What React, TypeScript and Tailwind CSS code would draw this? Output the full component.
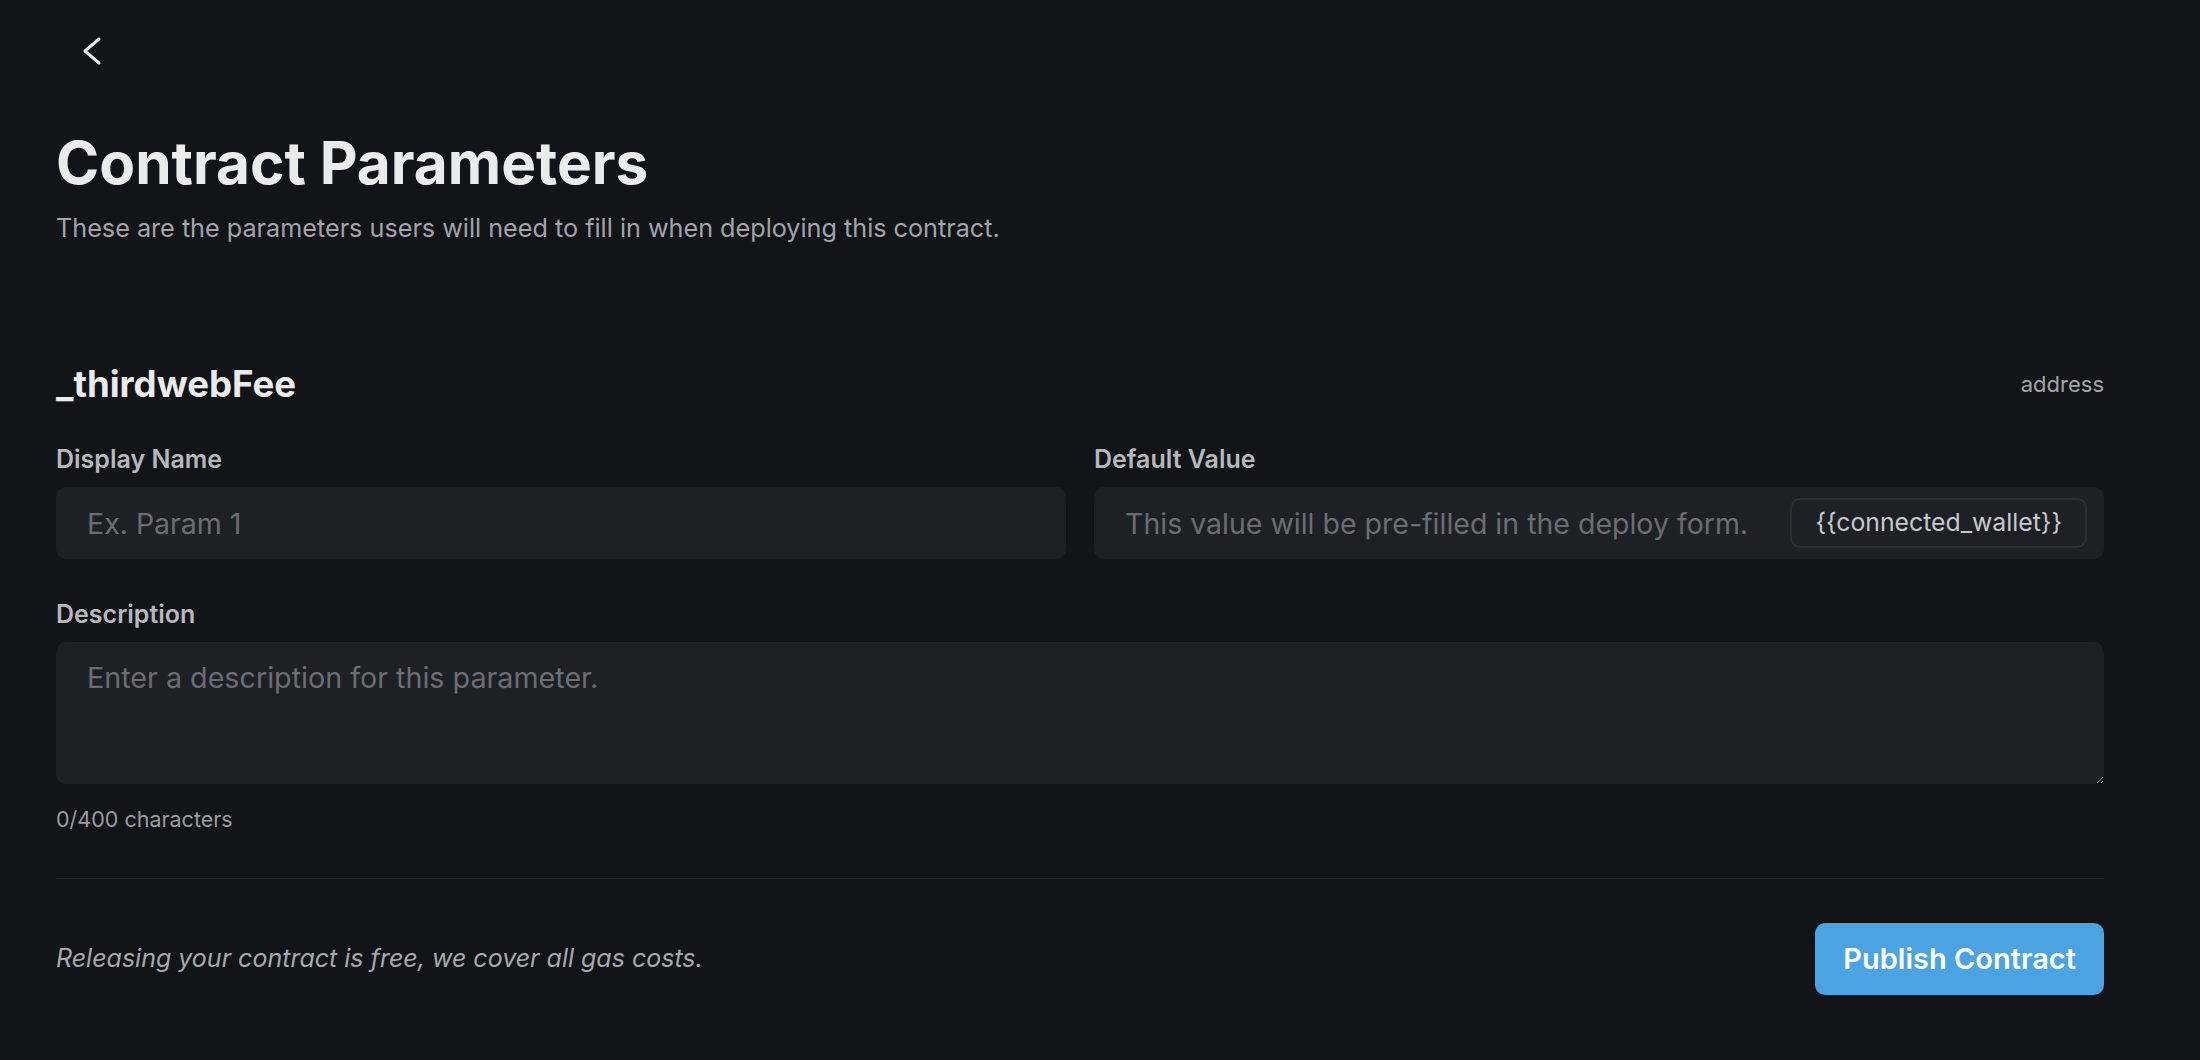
import { useState } from "react";

function BackChevron() {
  return (
    <svg
      width="18"
      height="28"
      viewBox="0 0 18 28"
      fill="none"
      stroke="#e8e8e8"
      strokeWidth="3"
      strokeLinecap="round"
      strokeLinejoin="round"
      className="block"
    >
      <path d="M16 2 L2 14 L16 26" />
    </svg>
  );
}

function FieldLabel({ children }: { children: React.ReactNode }) {
  return (
    <label className="block text-[25px] font-semibold leading-[24px] text-[#b8b8bc]">
      {children}
    </label>
  );
}

export default function App() {
  const [displayName, setDisplayName] = useState("");
  const [defaultValue, setDefaultValue] = useState("");
  const [description, setDescription] = useState("");

  return (
    <div className="min-h-screen w-full bg-[#121418] font-['Inter',sans-serif]">
      <div className="ml-[56px] w-[2048px]">
        <div className="pl-[27px] pt-[37px]">
          <button type="button" className="block">
            <BackChevron />
          </button>
        </div>

        <h1 className="mt-[69px] text-[58.5px] font-bold leading-[58px] text-[#ebebeb]">
          Contract Parameters
        </h1>
        <p className="mt-[23px] text-[25.2px] leading-[26px] text-[#a3a3a8]">
          These are the parameters users will need to fill in when deploying this contract.
        </p>

        <div className="mt-[125px] flex items-center justify-between">
          <h2 className="text-[36.6px] font-bold leading-[36px] text-[#ebebeb]">_thirdwebFee</h2>
          <span className="text-[22px] leading-[22px] text-[#a5a5a9]">address</span>
        </div>

        <div className="mt-[45px] grid grid-cols-2 gap-x-[28px]">
          <div>
            <FieldLabel>Display Name</FieldLabel>
            <input
              value={displayName}
              onChange={(e) => setDisplayName(e.target.value)}
              placeholder="Ex. Param 1"
              className="mt-[16px] h-[72px] w-full rounded-[10px] bg-[#1e2025] px-[31px] text-[28.5px] text-[#e5e5e5] outline-none placeholder:text-[#6c6d72]"
            />
          </div>
          <div>
            <FieldLabel>Default Value</FieldLabel>
            <div className="mt-[16px] flex h-[72px] w-full items-center rounded-[10px] bg-[#1e2025] pr-[17px]">
              <input
                value={defaultValue}
                onChange={(e) => setDefaultValue(e.target.value)}
                placeholder="This value will be pre-filled in the deploy form."
                className="h-full min-w-0 flex-1 bg-transparent pl-[31px] text-[28.5px] text-[#e5e5e5] outline-none placeholder:text-[#6c6d72]"
              />
              <span className="flex h-[50px] items-center rounded-[10px] border-2 border-[#2c2f35] px-[23px] text-[24.8px] text-[#c8c8cc]">
                {"{{connected_wallet}}"}
              </span>
            </div>
          </div>
        </div>

        <div className="mt-[43px]">
          <FieldLabel>Description</FieldLabel>
          <textarea
            value={description}
            onChange={(e) => setDescription(e.target.value)}
            placeholder="Enter a description for this parameter."
            className="mt-[16px] block h-[142px] w-full resize-y rounded-[10px] bg-[#1e2025] px-[31px] pt-[15px] text-[28.7px] leading-[42px] text-[#e5e5e5] outline-none [color-scheme:dark] placeholder:text-[#6c6d72]"
          />
          <p className="mt-[25px] text-[21.5px] leading-[20px] text-[#9b9ba0]">
            {description.length}/400 characters
          </p>
        </div>

        <div className="mt-[49px] h-px bg-[#23262b]" />

        <div className="mt-[44px] flex items-center justify-between">
          <p className="text-[25px] italic text-[#a8a8ad]">
            Releasing your contract is free, we cover all gas costs.
          </p>
          <button
            type="button"
            className="h-[72px] rounded-[10px] bg-[#4ca3e1] px-[28px] text-[29px] font-semibold text-white"
          >
            Publish Contract
          </button>
        </div>
      </div>
    </div>
  );
}
